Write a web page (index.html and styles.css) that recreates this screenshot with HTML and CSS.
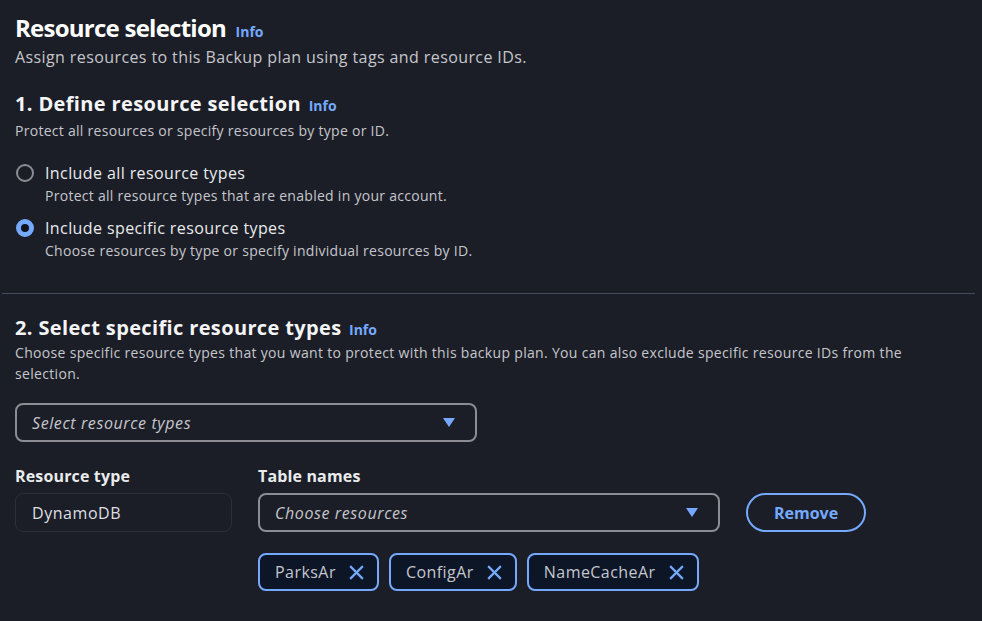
FILE: index.html
```html
<!DOCTYPE html>
<html>
<head>
<meta charset="utf-8">
<link rel="stylesheet" href="styles.css">
</head>
<body>
<div class="page">
  <section class="head">
    <h1 class="title">Resource selection <a class="info">Info</a></h1>
    <p class="subtitle">Assign resources to this Backup plan using tags and resource IDs.</p>
  </section>

  <section class="block">
    <h2 class="h2">1. Define resource selection <a class="info small">Info</a></h2>
    <p class="desc">Protect all resources or specify resources by type or ID.</p>
    <div class="radios">
      <div class="radio">
        <span class="dot"></span>
        <div class="rtext">
          <div class="rlabel">Include all resource types</div>
          <div class="rdesc">Protect all resource types that are enabled in your account.</div>
        </div>
      </div>
      <div class="radio">
        <span class="dot on"></span>
        <div class="rtext">
          <div class="rlabel">Include specific resource types</div>
          <div class="rdesc">Choose resources by type or specify individual resources by ID.</div>
        </div>
      </div>
    </div>
  </section>

  <hr class="divider">

  <section class="block2">
    <h2 class="h2">2. Select specific resource types <a class="info small">Info</a></h2>
    <p class="desc wide">Choose specific resource types that you want to protect with this backup plan. You can also exclude specific resource IDs from the selection.</p>
    <div class="select main">
      <span class="ph">Select resource types</span>
      <span class="caret"></span>
    </div>

    <div class="row">
      <div class="col c1">
        <div class="flabel">Resource type</div>
        <div class="readonly">DynamoDB</div>
      </div>
      <div class="col c2">
        <div class="flabel">Table names</div>
        <div class="select sub">
          <span class="ph">Choose resources</span>
          <span class="caret"></span>
        </div>
        <div class="tokens">
          <span class="token">ParksAr <svg class="x" viewBox="0 0 16 16"><path d="M2 2L14 14M14 2L2 14"/></svg></span>
          <span class="token">ConfigAr <svg class="x" viewBox="0 0 16 16"><path d="M2 2L14 14M14 2L2 14"/></svg></span>
          <span class="token">NameCacheAr <svg class="x" viewBox="0 0 16 16"><path d="M2 2L14 14M14 2L2 14"/></svg></span>
        </div>
      </div>
      <div class="col c3">
        <button class="btn">Remove</button>
      </div>
    </div>
  </section>
</div>
</body>
</html>
```

FILE: styles.css
```css
* { box-sizing: border-box; }
html, body { margin: 0; padding: 0; }
body {
  background: #1b1e26;
  color: #e9ebed;
  font-family: "Open Sans", "Noto Sans", sans-serif;
  width: 982px;
  height: 621px;
  overflow: hidden;
}
.page { padding: 11px 7px 0 15px; }
h1, h2, p { margin: 0; }
.title {
  font-size: 24px;
  font-weight: 700;
  line-height: 34px;
  letter-spacing: -0.75px;
  color: #ffffff;
}
.info {
  color: #75a9ff;
  font-size: 14px;
  font-weight: 700;
  line-height: 14px;
  margin-left: 4px;
  letter-spacing: 0;
}
.subtitle {
  font-size: 16px;
  line-height: 24px;
  letter-spacing: 0.4px;
  color: #c6c6cd;
}
.block { margin-top: 20px; }
.h2 {
  font-size: 20px;
  font-weight: 700;
  line-height: 30px;
  color: #f5f5f7;
  letter-spacing: 0.36px;
}
.h2 .info { font-size: 14px; margin-left: 2px; }
.desc {
  font-size: 14px;
  line-height: 20px;
  letter-spacing: 0.28px;
  color: #c6c6cd;
  margin-top: 2px;
}
.desc.wide { max-width: 910px; line-height: 21px; margin-top: -1px; letter-spacing: 0.32px; }
.radios { margin-top: 21px; display: flex; flex-direction: column; gap: 11px; }
.radio { display: flex; gap: 11px; align-items: flex-start; }
.dot {
  width: 18px; height: 18px;
  margin-left: 1px; margin-top: 2px;
  border-radius: 50%;
  border: 2px solid #8c8c94;
  flex: none;
}
.dot.on {
  border: 5px solid #75a9ff;
  background: #0f141a;
}
.rlabel { font-size: 16px; line-height: 22px; letter-spacing: 0.4px; color: #e9ebed; }
.rdesc { font-size: 14px; line-height: 20px; letter-spacing: 0.28px; color: #c6c6cd; margin-top: 2px; }
.divider {
  border: 0; border-top: 1px solid #414d5c;
  margin: 32px 0 0 -13px;
}
.block2 { margin-top: 19px; }
.select {
  display: flex; align-items: center; justify-content: space-between;
  border: 2px solid #8c8c94;
  border-radius: 8px;
  height: 39px;
  padding: 0 20px 0 15px;
  background: #1b1e26;
}
.select.main { width: 462px; margin-top: 19px; }
.ph { font-style: italic; font-size: 16px; letter-spacing: 0.6px; color: #c6c6cd; }
.caret {
  width: 0; height: 0;
  border-left: 6px solid transparent;
  border-right: 6px solid transparent;
  border-top: 9px solid #75a9ff;
}
.row { display: flex; margin-top: 23px; }
.col { display: flex; flex-direction: column; }
.c1 { width: 217px; }
.c2 { width: 462px; margin-left: 26px; }
.c3 { margin-left: 26px; padding-top: 28px; }
.flabel { font-size: 16px; font-weight: 700; line-height: 22px; letter-spacing: 0.15px; color: #e9ebed; margin-bottom: 6px; }
.readonly {
  height: 39px;
  border: 1px solid #2b2f38;
  border-radius: 8px;
  display: flex; align-items: center;
  padding-left: 16px;
  font-size: 16px;
  letter-spacing: 0.55px;
  color: #dedee3;
}
.select.sub { width: 462px; }
.tokens { display: flex; gap: 10px; margin-top: 21px; }
.token {
  display: inline-flex; align-items: center; gap: 12px;
  height: 38px;
  padding: 0 12px 0 15px;
  border: 2px solid #75a9ff;
  border-radius: 8px;
  background: #0c1626;
  font-size: 16px;
  letter-spacing: 0.45px;
  color: #c6c6cd;
}
.x { width: 17px; height: 17px; stroke: #75a9ff; stroke-width: 2; fill: none; }
.btn {
  width: 120px; height: 39px;
  border: 2px solid #75a9ff;
  border-radius: 20px;
  background: transparent;
  color: #75a9ff;
  font-family: inherit;
  font-size: 16px;
  font-weight: 700;
}
```
